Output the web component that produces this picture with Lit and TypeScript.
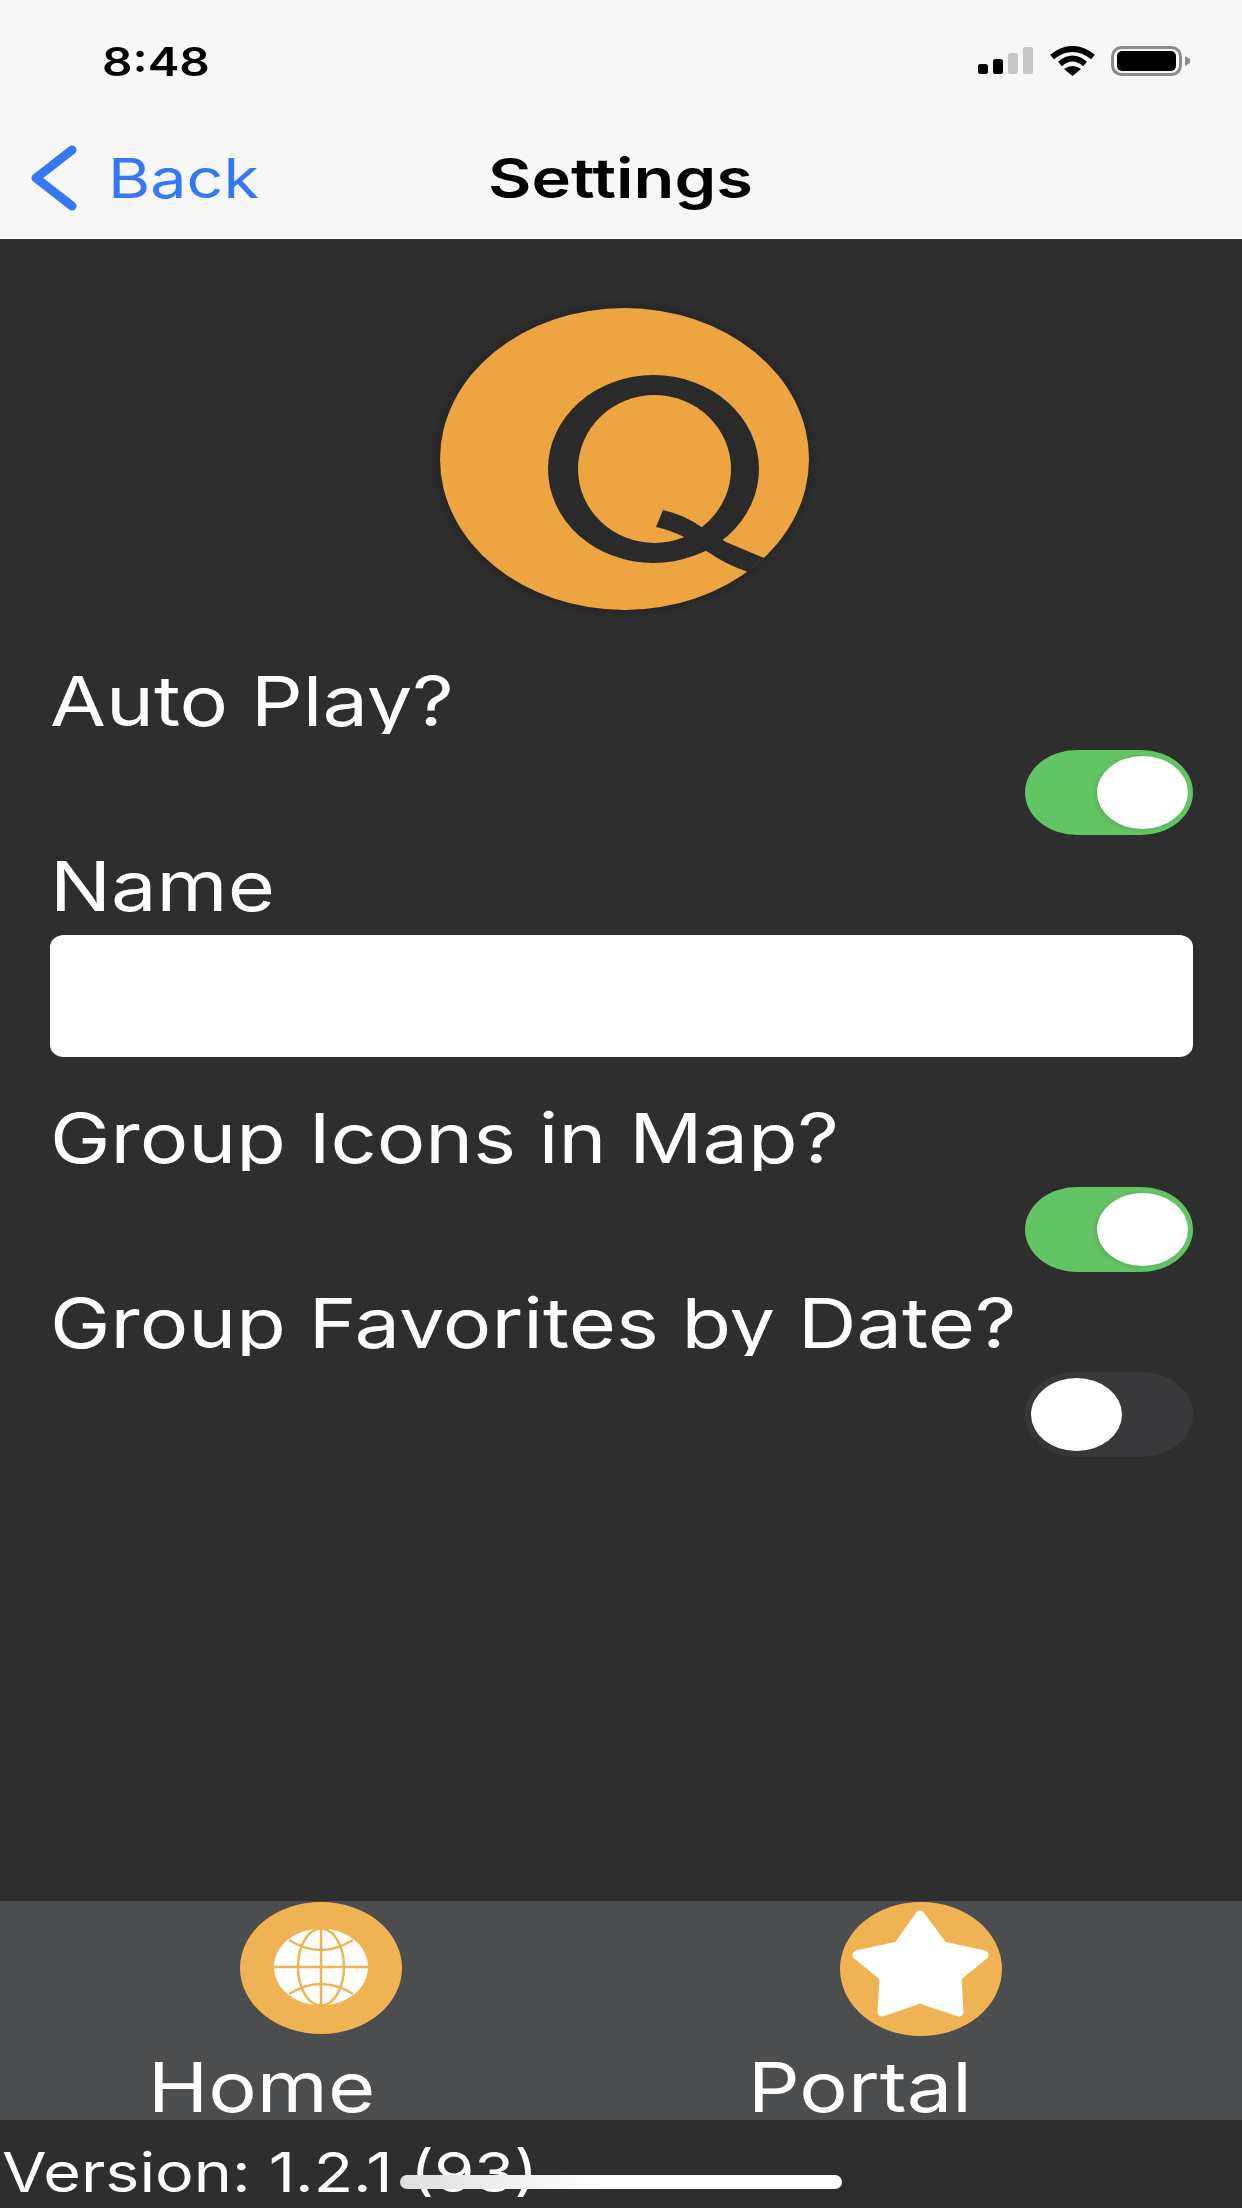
import { LitElement, css, html, svg } from "lit";
import { customElement, property } from "lit/decorators.js";

/**
 * On/off switch, stretched like the rest of the screenshot.
 */
@customElement("app-toggle")
export class AppToggle extends LitElement {
  @property({ type: Boolean }) on = false;

  protected override render() {
    return html`<div class="track ${this.on ? "on" : "off"}"><div class="thumb"></div></div>`;
  }

  static override styles = css`
    :host {
      display: block;
      align-self: flex-end;
    }
    .track {
      display: flex;
      align-items: center;
      box-sizing: border-box;
      width: 168px;
      height: 85px;
      border-radius: 52px / 42.5px;
    }
    .on {
      justify-content: flex-end;
      padding-right: 5px;
      background: #63c465;
    }
    .off {
      padding-left: 6px;
      background: #39393c;
    }
    .thumb {
      width: 91px;
      height: 73px;
      border-radius: 50%;
      background: #fff;
      box-shadow: -2px 1px 4px rgba(0, 0, 0, 0.12);
    }
  `;
}

const globe = svg`
  <ellipse cx="81" cy="66" rx="81" ry="66" fill="#f0b354" />
  <ellipse cx="81" cy="65" rx="47" ry="38.5" fill="#fff" />
  <g fill="none" stroke="#f0b354" stroke-width="2.5">
    <ellipse cx="81" cy="65" rx="23" ry="38.5" />
    <path d="M81 26V104M34 65H128" />
    <path d="M49 38Q81 58 113 38M49 92Q81 72 113 92" />
  </g>
`;

const star = svg`
  <ellipse cx="81" cy="67" rx="81" ry="67" fill="#f0b354" />
  <path
    d="M80 13L103 44L144 53L117 75L119 110L80 97L42 110L44 75L17 53L58 44Z"
    fill="#fff"
    stroke="#fff"
    stroke-width="9"
    stroke-linejoin="round"
  />
`;

@customElement("app-root")
export class AppRoot extends LitElement {
  protected override render() {
    return html`
      <header>
        <div class="status">
          <span class="time"><span class="wide time-text">8:48</span></span>
          <div class="status-icons">
            <svg width="56" height="30" viewBox="0 0 56 30">
              <rect x="0" y="18" width="10" height="10" rx="2.5" fill="#000" />
              <rect x="15" y="13" width="10" height="15" rx="2.5" fill="#000" />
              <rect x="30" y="7" width="10" height="21" rx="2.5" fill="#c6c6c6" />
              <rect x="45" y="1" width="10" height="27" rx="2.5" fill="#c6c6c6" />
            </svg>
            <svg width="47" height="30" viewBox="0 0 47 30">
              <path d="M3 11Q23.5 -5 44 11M11 18Q23.5 7 36 18" fill="none" stroke="#000" stroke-width="6" />
              <path d="M15 23Q23.5 17 32 23L23.5 30Z" fill="#000" />
            </svg>
            <svg width="80" height="30" viewBox="0 0 80 30">
              <rect x="1.5" y="1.5" width="68" height="27" rx="9" fill="none" stroke="#8a8a8a" stroke-width="3" />
              <rect x="6" y="5" width="59" height="20" rx="5" fill="#000" />
              <path d="M74 10L79 13V17L74 20Z" fill="#8a8a8a" />
            </svg>
          </div>
        </div>
        <div class="nav">
          <svg class="chevron" width="50" height="66" viewBox="0 0 50 66">
            <path d="M44 5L8 33L44 61" fill="none" stroke="#3478f6" stroke-width="9" stroke-linecap="round" stroke-linejoin="round" />
          </svg>
          <span class="back"><span class="wide">Back</span></span>
          <span class="title"><span class="wide title-text">Settings</span></span>
        </div>
      </header>

      <main>
        <svg class="logo" width="369" height="302" viewBox="0 0 369 302">
          <ellipse cx="184.5" cy="151" rx="184.5" ry="151" fill="#eca540" />
          <ellipse cx="213.5" cy="161" rx="105.5" ry="94" fill="#2a2a2a" />
          <ellipse cx="214.5" cy="161" rx="76.5" ry="74" fill="#eca540" />
          <path d="M216 219L223 202Q245 207 263 220L286 234L324 250L308 264Q285 256 268 244L244 229Q230 222 216 219Z" fill="#2a2a2a" />
        </svg>

        <div class="label"><span class="wide">Auto Play?</span></div>
        <app-toggle on class="after-label"></app-toggle>

        <div class="label plain after-toggle"><span class="wide">Name</span></div>
        <input class="after-label" type="text" aria-label="Name" />

        <div class="label after-input"><span class="wide">Group Icons in Map?</span></div>
        <app-toggle on class="after-label"></app-toggle>

        <div class="label after-toggle"><span class="wide">Group Favorites by Date?</span></div>
        <app-toggle class="after-label"></app-toggle>
      </main>

      <nav class="tabs">
        <div class="tab">
          <svg class="tab-icon" width="163" height="134" viewBox="0 0 163 134">${globe}</svg>
          <div class="tab-label"><span class="wide">Home</span></div>
        </div>
        <div class="tab">
          <svg class="tab-icon" width="163" height="134" viewBox="0 0 163 134">${star}</svg>
          <div class="tab-label"><span class="wide">Portal</span></div>
        </div>
      </nav>

      <footer><span class="wide">Version: 1.2.1 (93)</span></footer>
      <div class="home-bar"></div>
    `;
  }

  static override styles = css`
    :host {
      display: flex;
      flex-direction: column;
      position: relative;
      width: 1242px;
      height: 2208px;
      overflow: hidden;
      background: #2e2e2e;
      color: #fff;
      font-family: Inter, "Liberation Sans", sans-serif;
    }
    .wide {
      display: inline-block;
      transform: scaleX(1.175);
      transform-origin: left center;
      white-space: nowrap;
    }
    .time-text {
      transform: scaleX(1.19);
    }
    .title-text {
      transform: scaleX(1.215);
    }
    header {
      flex: none;
      height: 237px;
      background: #f7f7f7;
      border-bottom: 2px solid #fff;
      color: #000;
    }
    .status {
      display: flex;
      align-items: center;
      justify-content: space-between;
      height: 122px;
      padding: 0 51px 0 102px;
    }
    .time {
      font-size: 40px;
      font-weight: 600;
    }
    .status-icons {
      display: flex;
      align-items: center;
      gap: 15px;
    }
    .nav {
      display: flex;
      align-items: center;
      height: 112px;
      padding-left: 28px;
    }
    .chevron {
      flex: none;
    }
    .back {
      width: 380px;
      margin-left: 30px;
      font-size: 55px;
      color: #3478f6;
    }
    .title {
      font-size: 55px;
      font-weight: 600;
    }
    main {
      flex: 1;
      display: flex;
      flex-direction: column;
      padding: 69px 49px 0 50px;
    }
    .logo {
      flex: none;
      align-self: center;
      margin: 0 0 49px 5px;
      overflow: visible;
      filter: drop-shadow(0 0 8px rgba(0, 0, 0, 0.3));
    }
    .label {
      height: 75px;
      overflow: hidden;
      font-size: 69px;
      line-height: 84px;
    }
    .plain {
      overflow: visible;
    }
    .after-label {
      margin-top: 16px;
    }
    .after-toggle {
      margin-top: 9px;
    }
    .after-input {
      margin-top: 39px;
    }
    input {
      display: block;
      box-sizing: border-box;
      width: 100%;
      height: 122px;
      padding: 0 16px;
      border: none;
      border-radius: 14px / 12px;
      background: #fff;
    }
    .tabs {
      flex: none;
      display: grid;
      grid-template-columns: 600px 600px;
      height: 219px;
      padding-top: 1px;
      box-sizing: border-box;
      background: #4c4d4f;
    }
    .tab-icon {
      display: block;
      margin-left: 240px;
    }
    .tab-label {
      margin: 9px 0 0 148px;
      font-size: 69px;
      line-height: 84px;
    }
    footer {
      flex: none;
      height: 88px;
      box-sizing: border-box;
      padding: 19px 0 0 2px;
      font-size: 55px;
      line-height: 66px;
    }
    .home-bar {
      position: absolute;
      left: 400px;
      top: 2175px;
      width: 442px;
      height: 14px;
      border-radius: 7px;
      background: linear-gradient(90deg, #dedede, #fff 45%);
    }
  `;
}
